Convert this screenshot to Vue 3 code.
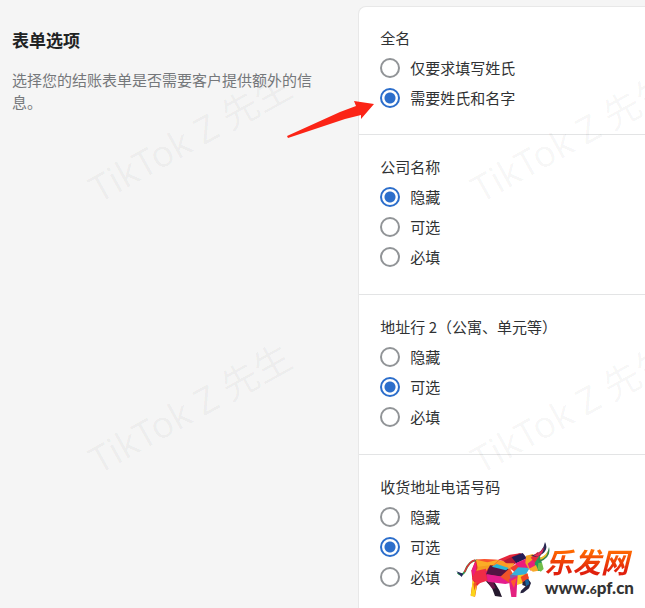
<template>
  <div class="settings-page">
    <aside class="settings-intro">
      <h2 class="settings-title">表单选项</h2>
      <p class="settings-text">选择您的结账表单是否需要客户提供额外的信息。</p>
    </aside>

    <form class="settings-card" @submit.prevent>
      <fieldset v-for="group in groups" :key="group.name" class="option-group">
        <legend class="option-legend">{{ group.label }}</legend>
        <label v-for="option in group.options" :key="option" class="option-row">
          <input v-model="group.value" type="radio" :name="group.name" :value="option" class="option-radio" />
          <span class="option-text">{{ option }}</span>
        </label>
      </fieldset>
    </form>

    <div class="watermarks" aria-hidden="true">
      <span class="watermark wm-top wm-left">TikTok Z 先生</span>
      <span class="watermark wm-top wm-right">TikTok Z 先生</span>
      <span class="watermark wm-bottom wm-left">TikTok Z 先生</span>
      <span class="watermark wm-bottom wm-right">TikTok Z 先生</span>
    </div>

    <svg class="arrow" viewBox="0 0 88 40" aria-hidden="true">
      <path d="M0 36 L53 12 L69 6 L67 1 L87 4 L74 19 L74 15 L58 19 L1 38 Z" fill="#fb2416" />
    </svg>

    <a href="#" class="brand">
      <svg class="brand-bull" viewBox="0 0 300 198" aria-hidden="true">
        <path d="M23 104 Q35 118 46 98 Q59 65 82 68" fill="none" stroke="#2e9b4c" stroke-width="6" />
        <path d="M43 103 Q57 70 75 66" fill="none" stroke="#e52a35" stroke-width="4" />
        <path d="M19 100 L40 107 L35 117 Z" fill="#23265c" />
        <!-- hind legs -->
        <path d="M76 68 L64 98 L68 132 L62 172 L75 176 L81 144 L112 112 L108 72 Z" fill="#e92032" />
        <path d="M76 72 L65 97 L70 120 L84 88 Z" fill="#ec1c81" />
        <path d="M68 126 L62 174 L75 176 L80 143 Z" fill="#fbd51a" />
        <path d="M70 137 L83 125 L73 158 Z" fill="#f05423" />
        <path d="M108 130 L128 124 L148 157 L156 177 L135 174 L126 150 Z" fill="#24192c" />
        <path d="M112 130 L128 128 L137 151 L127 153 Z" fill="#671747" />
        <!-- body -->
        <path d="M78 65 L147 66 L178 90 L164 130 L111 130 L78 110 Z" fill="#e5263c" />
        <path d="M78 65 L147 66 L128 83 L83 89 Z" fill="#fbac26" />
        <path d="M78 65 L103 63 L145 65 L112 73 Z" fill="#f9522d" />
        <path d="M84 86 L121 82 L105 104 L78 101 Z" fill="#f59b21" />
        <path d="M77 99 L108 92 L111 128 L84 137 L66 123 Z" fill="#ef2c46" />
        <path d="M106 98 L121 105 L148 130 L113 130 Z" fill="#d81b78" />
        <path d="M120 82 L181 87 L164 118 L108 109 Z" fill="#541443" />
        <path d="M128 83 L147 67 L195 76 L179 94 Z" fill="#fb9c26" />
        <path d="M125 86 L140 78 L176 90 L168 97 Z" fill="#28b7d7" />
        <path d="M144 65 L180 50 L210 46 L180 74 Z" fill="#e5263c" />
        <path d="M160 69 L210 45 L223 51 L184 88 Z" fill="#b41a36" />
        <path d="M185 58 L218 45 L231 61 L199 76 Z" fill="#261b55" />
        <path d="M167 76 L193 76 L183 98 Z" fill="#ff9d30" />
        <path d="M111 109 L164 117 L184 134 L166 138 L113 131 Z" fill="#e51d8e" />
        <path d="M151 116 L179 91 L193 113 L180 136 Z" fill="#f05329" />
        <path d="M180 90 L209 72 L231 91 L203 112 Z" fill="#ef3c2e" />
        <path d="M194 77 L231 61 L235 91 L211 89 Z" fill="#ed1a7a" />
        <path d="M186 108 L204 88 L239 90 L225 114 L181 113 Z" fill="#36afd8" />
        <path d="M179 110 L222 113 L215 132 L184 136 Z" fill="#8061a5" />
        <!-- shoulder and front legs -->
        <path d="M177 124 L204 113 L201 143 L199 177 L184 177 L179 144 Z" fill="#e42180" />
        <path d="M182 129 L200 120 L192 150 Z" fill="#ff5a2b" />
        <path d="M203 112 L235 108 L222 134 L201 141 Z" fill="#fac81e" />
        <path d="M212 117 L232 105 L237 121 L219 137 Z" fill="#ef4524" />
        <path d="M218 133 L234 122 L243 135 L237 151 L220 164 L211 166 L213 158 L227 145 L217 141 Z" fill="#27233f" />
        <path d="M225 126 L235 124 L238 138 L228 145 Z" fill="#17639b" />
        <!-- head and horns -->
        <path d="M228 53 L249 48 L261 62 L236 93 L226 75 Z" fill="#f5a324" />
        <path d="M233 77 L261 54 L269 73 L241 98 Z" fill="#e61f79" />
        <path d="M242 59 L263 42 L273 51 L256 74 Z" fill="#e62b39" />
        <path d="M254 75 L269 52 L276 76 L270 99 L258 98 Z" fill="#249b58" />
        <path d="M265 75 L276 74 L281 93 L272 101 L263 93 Z" fill="#71bd49" />
        <path d="M236 93 L258 81 L265 98 L249 101 Z" fill="#f9a729" />
        <path d="M242 53 Q279 48 285 12 Q300 41 260 57 Z" fill="#282752" />
        <path d="M250 52 Q274 43 281 28 Q282 48 261 56 Z" fill="#e52b57" />
        <path d="M263 62 Q293 57 297 27 Q305 58 269 72 Z" fill="#35834d" />
        <path d="M270 60 Q287 52 293 40 Q292 59 272 65 Z" fill="#f4c22d" />
      </svg>
      <span class="brand-words">
        <span class="brand-name">乐发网</span>
        <span class="brand-url">www.<small class="brand-six">6</small>pf.cn</span>
      </span>
    </a>
  </div>
</template>

<script setup>
import { ref } from 'vue';

const groups = ref([
  {
    name: 'fullName',
    label: '全名',
    options: ['仅要求填写姓氏', '需要姓氏和名字'],
    value: '需要姓氏和名字',
  },
  {
    name: 'company',
    label: '公司名称',
    options: ['隐藏', '可选', '必填'],
    value: '隐藏',
  },
  {
    name: 'address2',
    label: '地址行 2（公寓、单元等）',
    options: ['隐藏', '可选', '必填'],
    value: '可选',
  },
  {
    name: 'phone',
    label: '收货地址电话号码',
    options: ['隐藏', '可选', '必填'],
    value: '可选',
  },
]);
</script>

<style>
body {
  margin: 0;
  background: #f5f5f5;
}
</style>

<style scoped>
.settings-page {
  position: relative;
  display: grid;
  grid-template-columns: 5fr 4fr;
  height: 100vh;
  box-sizing: border-box;
  padding-top: 6px;
  overflow: hidden;
  background: #f5f5f5;
  color: #303234;
  font-family: "Noto Sans CJK SC", sans-serif;
  font-size: 15px;
}
.settings-intro {
  padding: 21px 40px 0 12px;
}
.settings-title {
  margin: 0;
  font-size: 17px;
  line-height: 26px;
  font-weight: 700;
  color: #202223;
}
.settings-text {
  margin: 16px 0 0;
  line-height: 22px;
  color: #75787b;
}
.settings-card {
  align-self: start;
  background: #fff;
  border: 1px solid #e8e8e8;
  border-right: none;
  border-radius: 8px 0 0 8px;
}
.option-group {
  margin: 0;
  padding: 17px 21px 22px;
  border: none;
  border-top: 1px solid #e3e4e5;
}
.option-group:first-child {
  padding-top: 16px;
  padding-bottom: 21px;
  border-top: none;
}
.option-legend {
  float: left;
  width: 100%;
  padding: 0;
  line-height: 30px;
}
.option-row {
  clear: both;
  display: flex;
  align-items: center;
  gap: 10px;
  height: 30px;
  cursor: pointer;
}
.option-radio {
  appearance: none;
  flex: none;
  box-sizing: border-box;
  width: 20px;
  height: 20px;
  margin: 0;
  border: 2px solid #919497;
  border-radius: 50%;
  background: #fff;
}
.option-radio:checked {
  border-color: #2c6ecb;
  background: radial-gradient(circle, #2c6ecb 5px, #fff 6px);
}
.option-text {
  padding-bottom: 2px;
}
.watermarks {
  position: absolute;
  inset: 0;
  overflow: hidden;
  pointer-events: none;
}
.watermark {
  position: absolute;
  font-family: "Noto Sans", "Noto Sans CJK SC", sans-serif;
  font-size: 37px;
  line-height: 40px;
  white-space: nowrap;
  color: rgba(0, 0, 0, 0.04);
  transform: translate(-50%, -50%) rotate(-29deg);
}
.wm-left {
  left: 190px;
}
.wm-right {
  left: 572px;
}
.wm-top {
  top: 137px;
}
.wm-bottom {
  top: 408px;
}
.arrow {
  position: absolute;
  left: 287px;
  top: 100px;
  width: 88px;
  height: 40px;
}
.brand {
  position: absolute;
  right: 11px;
  bottom: 4px;
  display: flex;
  align-items: flex-end;
  text-decoration: none;
}
.brand-bull {
  width: 100px;
  height: 66px;
  margin-right: -5px;
}
.brand-words {
  display: flex;
  flex-direction: column;
  padding-bottom: 4px;
}
.brand-name {
  font-size: 28px;
  line-height: 34px;
  font-weight: 700;
  font-style: italic;
  color: transparent;
  background: linear-gradient(#ff6a00 20%, #e0200c 80%);
  background-clip: text;
}
.brand-url {
  font-family: Lato, sans-serif;
  font-size: 17px;
  line-height: 20px;
  font-weight: 900;
  color: #333;
}
.brand-six {
  font-size: 12px;
}
</style>
